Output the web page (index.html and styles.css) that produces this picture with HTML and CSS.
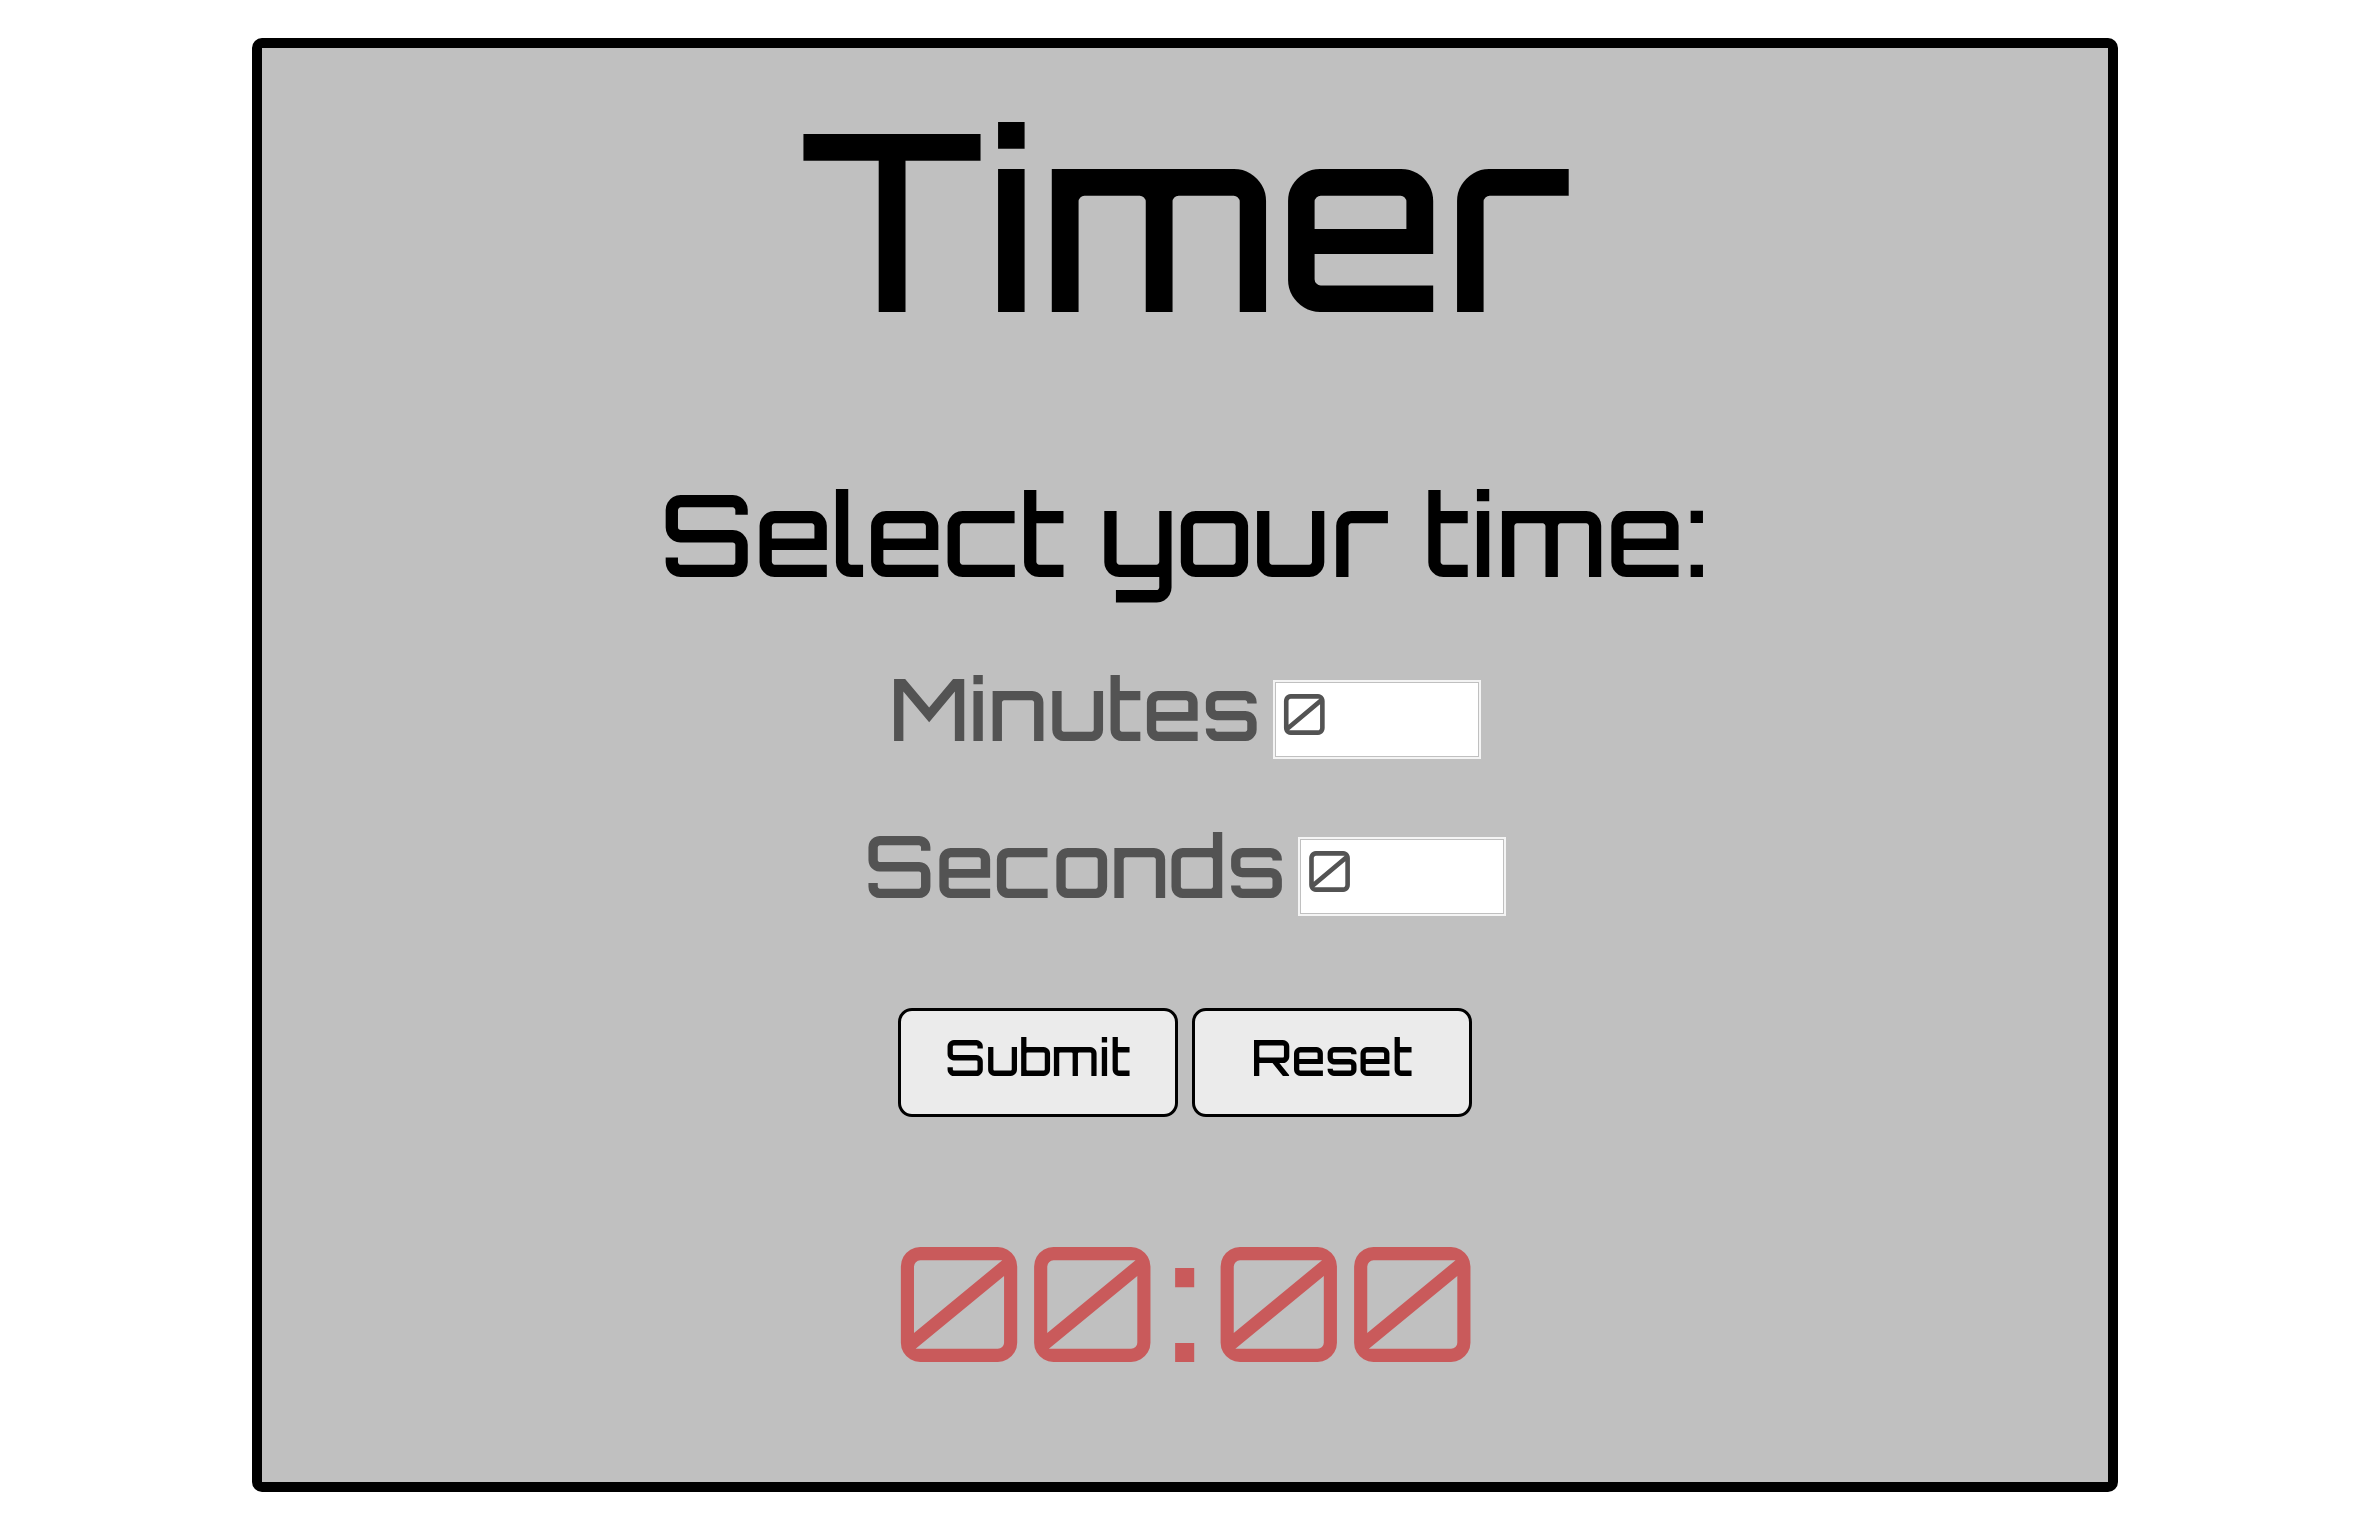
FILE: index.html
```html
<!DOCTYPE html>
<html lang="en">
<head>
  <meta charset="utf-8">
  <meta name="viewport" content="width=device-width, initial-scale=1">
  <title>Timer</title>
  <link rel="stylesheet" href="styles.css">
</head>
<body>
  <main class="panel">
    <h1 class="title">Timer</h1>
    <h2 class="subtitle">Select your time:</h2>
    <form class="form">
      <div class="field">
        <label class="label" for="minutes">Minutes</label>
        <input class="number" id="minutes" type="number" min="0" value="0">
      </div>
      <div class="field">
        <label class="label" for="seconds">Seconds</label>
        <input class="number" id="seconds" type="number" min="0" max="59" value="0">
      </div>
      <div class="actions">
        <button class="button" type="submit">Submit</button>
        <button class="button" type="reset">Reset</button>
      </div>
    </form>
    <div class="clock" role="timer"><span>00</span><span class="colon">:</span><span>00</span></div>
  </main>
</body>
</html>
```

FILE: styles.css
```css
*,
*::before,
*::after {
  box-sizing: border-box;
}

body {
  margin: 38px 0 46px 4px;
  background: #fff;
  color: #000;
  font-family: Orbitron, "DejaVu Sans", sans-serif;
  font-weight: 500;
}

.panel {
  display: flex;
  flex-direction: column;
  align-items: center;
  width: 79%;
  margin: 0 auto;
  padding: 42px 24px 101px;
  border: 10px solid #000;
  border-radius: 10px;
  background: #c0c0c0;
}

.title {
  margin: 0 0 128px;
  font-size: 246px;
  font-weight: 500;
  line-height: 256px;
}

.subtitle {
  margin: 0 0 86px;
  font-size: 114px;
  font-weight: 500;
  line-height: 120px;
  text-align: center;
}

.form {
  display: flex;
  flex-direction: column;
  align-items: center;
  gap: 78px;
}

.field {
  display: flex;
  align-items: flex-start;
  gap: 12px;
}

.label {
  color: #535353;
  font-size: 86px;
  line-height: 56px;
}

.number {
  width: 208px;
  height: 79px;
  padding: 0 6px 12px;
  border: 2px solid #f4f4f4;
  border-radius: 0;
  background: #fff;
  box-shadow: inset 0 0 0 1px #c0c0c0;
  color: #535353;
  font-family: inherit;
  font-size: 56px;
  font-weight: 400;
  appearance: textfield;
}

.number::-webkit-inner-spin-button {
  display: none;
}

.actions {
  display: flex;
  gap: 14px;
  margin-top: 14px;
}

.button {
  width: 280px;
  height: 109px;
  padding: 0 0 12px;
  border: 3px solid #000;
  border-radius: 14px;
  background: #ebebeb;
  color: #000;
  font-family: inherit;
  font-size: 49px;
  font-weight: 500;
}

.clock {
  display: flex;
  gap: 8px;
  margin-top: 104px;
  color: #c95a5b;
  font-size: 160px;
  font-weight: 400;
  line-height: 160px;
}

.colon {
  font-weight: 600;
}
```
